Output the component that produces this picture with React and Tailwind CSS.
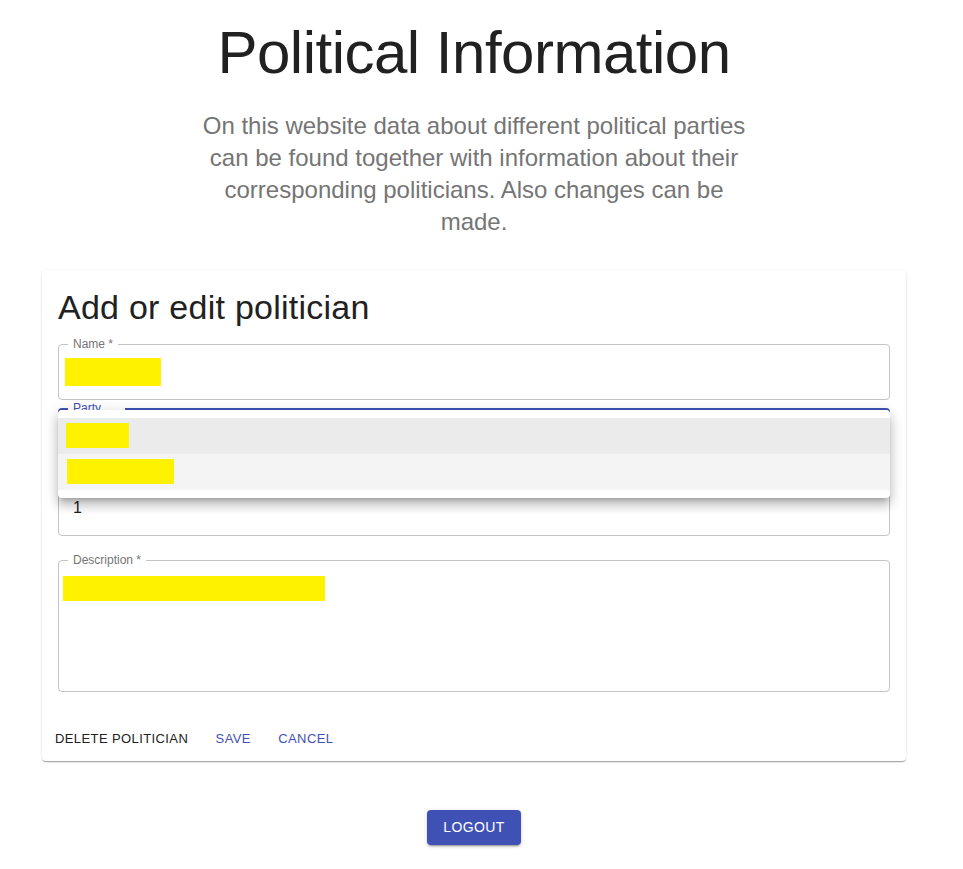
import React from "react";

const font = { fontFamily: '"Liberation Sans", Arial, Helvetica, sans-serif' };

function FieldLabel({ children, className = "" }) {
  return (
    <span
      className={`absolute left-[9px] -top-[7px] bg-white px-[5px] text-[12px] leading-[12px] text-[#757575] whitespace-nowrap ${className}`}
    >
      {children}
    </span>
  );
}

export default function App() {
  return (
    <div className="w-[948px] bg-white min-h-[869px]" style={font}>
      <div className="flex flex-col items-center pt-[17px]">
        <h1 className="text-[60px] leading-[72px] tracking-[-0.5px] font-normal text-[#212121] mb-[21px]">
          Political Information
        </h1>
        <p className="w-[552px] text-center text-[24px] leading-[32px] text-[#757575]">
          On this website data about different political parties can be found together with
          information about their corresponding politicians. Also changes can be made.
        </p>
      </div>

      <div className="mx-[42px] mt-[32px] rounded bg-white shadow-[0px_2px_1px_-1px_rgba(0,0,0,0.2),0px_1px_1px_0px_rgba(0,0,0,0.14),0px_1px_3px_0px_rgba(0,0,0,0.12)]">
        <div className="px-4 pt-4 pb-[24px]">
          <h2 className="text-[34px] leading-[42px] tracking-[0.25px] text-[#212121] font-normal">
            Add or edit politician
          </h2>

          {/* Name */}
          <div className="relative mt-4 h-[56px] rounded border border-[#c4c4c4] flex items-center pl-[6px]">
            <FieldLabel>Name *</FieldLabel>
            <div className="w-[96px] h-[28px] bg-[#fff200]" />
          </div>

          {/* Party (focused, with open menu) */}
          <div className="relative mt-2 h-[56px] rounded border-2 border-[#3f51b5]">
            <span className="absolute left-[8px] -top-[8px] bg-white pl-[5px] w-[57px] text-[12px] leading-[12px] text-[#3f51b5]">
              Party
            </span>
            <div className="absolute -left-[2px] -right-[2px] top-0 z-10 rounded bg-white py-2 shadow-[0px_5px_5px_-3px_rgba(0,0,0,0.2),0px_8px_10px_1px_rgba(0,0,0,0.14),0px_3px_14px_2px_rgba(0,0,0,0.12)]">
              <div className="h-[36px] bg-[#ebebeb] pl-[8px] pt-[5px]">
                <div className="w-[63px] h-[25px] bg-[#fff200]" />
              </div>
              <div className="h-[36px] bg-[#f4f4f4] pl-[9px] pt-[5px]">
                <div className="w-[107px] h-[25px] bg-[#fff200]" />
              </div>
            </div>
          </div>

          {/* Third field */}
          <div className="relative mt-4 h-[56px] rounded border border-[#c4c4c4] flex items-center px-[14px]">
            <span className="text-[16px] text-[#212121]">1</span>
          </div>

          {/* Description */}
          <div className="relative mt-6 h-[132px] rounded border border-[#c4c4c4] pl-[4px] pt-[15px]">
            <FieldLabel>Description *</FieldLabel>
            <div className="w-[262px] h-[25px] bg-[#fff200]" />
          </div>
        </div>

        <div className="flex items-center px-2 pt-2 pb-[6px]">
          <button className="min-w-[64px] rounded px-[5px] py-1 text-[13px] leading-[22.75px] tracking-[0.4px] uppercase text-[#212121] font-medium">
            Delete Politician
          </button>
          <button className="ml-2 min-w-[64px] rounded px-[5px] py-1 text-[13px] leading-[22.75px] tracking-[0.4px] uppercase text-[#3f51b5] font-medium">
            Save
          </button>
          <button className="ml-2 min-w-[64px] rounded px-[5px] py-1 text-[13px] leading-[22.75px] tracking-[0.4px] uppercase text-[#3f51b5] font-medium">
            Cancel
          </button>
        </div>
      </div>

      <div className="flex justify-center mt-[49px]">
        <button className="rounded bg-[#3f51b5] px-4 py-[6px] text-[14px] leading-[23px] tracking-[0.4px] uppercase text-white font-medium shadow-[0px_3px_1px_-2px_rgba(0,0,0,0.2),0px_2px_2px_0px_rgba(0,0,0,0.14),0px_1px_5px_0px_rgba(0,0,0,0.12)]">
          Logout
        </button>
      </div>
    </div>
  );
}
